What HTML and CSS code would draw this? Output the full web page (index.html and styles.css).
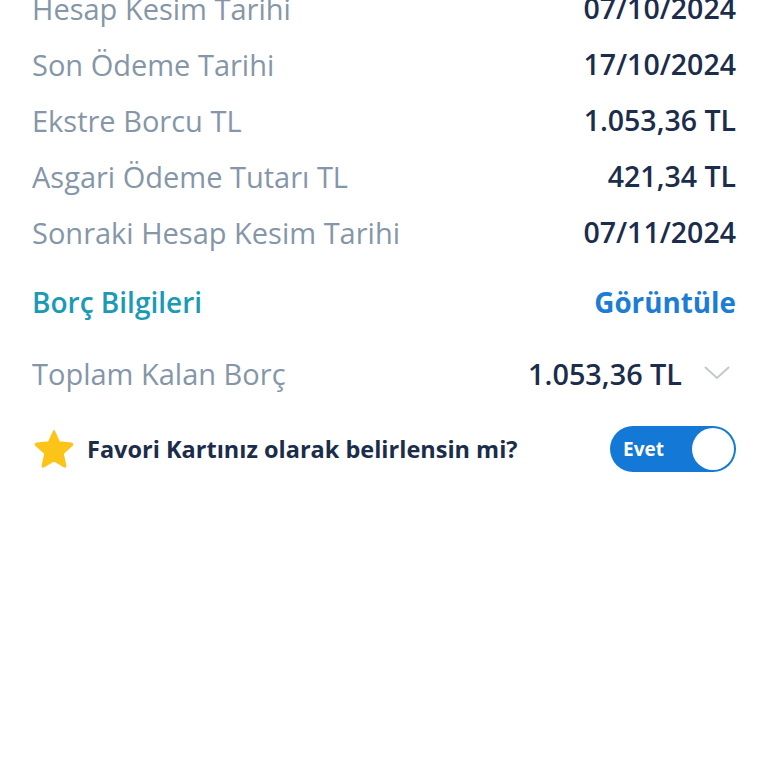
FILE: index.html
```html
<!DOCTYPE html>
<html lang="tr">
<head>
<meta charset="utf-8">
<link rel="stylesheet" href="styles.css">
</head>
<body>
<div class="page">
  <div class="list">
    <div class="row"><span class="label">Hesap Kesim Tarihi</span><span class="value">07/10/2024</span></div>
    <div class="row"><span class="label">Son Ödeme Tarihi</span><span class="value">17/10/2024</span></div>
    <div class="row"><span class="label">Ekstre Borcu TL</span><span class="value">1.053,36 TL</span></div>
    <div class="row"><span class="label">Asgari Ödeme Tutarı TL</span><span class="value">421,34 TL</span></div>
    <div class="row"><span class="label">Sonraki Hesap Kesim Tarihi</span><span class="value">07/11/2024</span></div>
  </div>
  <div class="row section">
    <span class="section-title">Borç Bilgileri</span>
    <span class="link">Görüntüle</span>
  </div>
  <div class="row total">
    <span class="label">Toplam Kalan Borç</span>
    <span class="total-right">
      <span class="value">1.053,36 TL</span>
      <svg class="chevron" width="26" height="14" viewBox="0 0 26 14"><path d="M1.5 1.5 L13 12 L24.5 1.5" fill="none" stroke="#c3c9cf" stroke-width="2" stroke-linecap="round" stroke-linejoin="round"/></svg>
    </span>
  </div>
  <div class="fav">
    <div class="fav-left">
      <svg class="star" width="42" height="40" viewBox="0 0 24 23"><path d="M12 1.2 L14.9 7.6 L21.9 8.4 Q22.9 8.6 22.2 9.4 L17 14.1 L18.5 21 Q18.7 22 17.8 21.5 L12 18 L6.2 21.5 Q5.3 22 5.5 21 L7 14.1 L1.8 9.4 Q1.1 8.6 2.1 8.4 L9.1 7.6 Z" fill="#fcc419" stroke="#fcc419" stroke-width="1.2" stroke-linejoin="round"/></svg>
      <span class="fav-text">Favori Kartınız olarak belirlensin mi?</span>
    </div>
    <div class="toggle">
      <span class="toggle-text">Evet</span>
      <span class="knob"></span>
    </div>
  </div>
</div>
</body>
</html>
```
FILE: styles.css
```css
html, body {
  margin: 0;
  padding: 0;
  background: #ffffff;
}
body {
  font-family: "Open Sans", "Noto Sans", sans-serif;
  width: 768px;
  height: 768px;
  overflow: hidden;
}
.page {
  padding: 0 32px;
}
.list {
  margin-top: -20px;
}
.row {
  display: flex;
  justify-content: space-between;
  align-items: center;
  height: 56px;
}
.label {
  font-size: 29px;
  color: #8596a8;
  font-weight: 400;
}
.value {
  font-size: 28.5px;
  color: #1b2d4b;
  font-weight: 600;
}
.section {
  margin-top: 14px;
}
.section-title {
  font-size: 28px;
  font-weight: 600;
  color: #1b9ab6;
}
.link {
  font-size: 27.8px;
  font-weight: 700;
  color: #1b7dd3;
}
.total {
  margin-top: 15px;
}
.total .value {
  font-size: 28.8px;
}
.total-right {
  display: flex;
  align-items: center;
  gap: 22px;
}
.chevron {
  margin-right: 6px;
}
.fav {
  display: flex;
  justify-content: space-between;
  align-items: center;
  margin-top: 25px;
  height: 46px;
}
.fav-left {
  display: flex;
  align-items: center;
  gap: 12px;
}
.star {
  margin-left: 1px;
}
.fav-text {
  font-size: 23.5px;
  font-weight: 700;
  color: #1b2d4b;
}
.toggle {
  width: 126px;
  height: 46px;
  box-sizing: border-box;
  border-radius: 23px;
  background: #1479d6;
  display: flex;
  align-items: center;
  justify-content: space-between;
  padding: 0 2px 0 13px;
}
.toggle-text {
  color: #ffffff;
  font-size: 19px;
  font-weight: 700;
}
.knob {
  width: 42px;
  height: 42px;
  border-radius: 50%;
  background: #ffffff;
}
```
